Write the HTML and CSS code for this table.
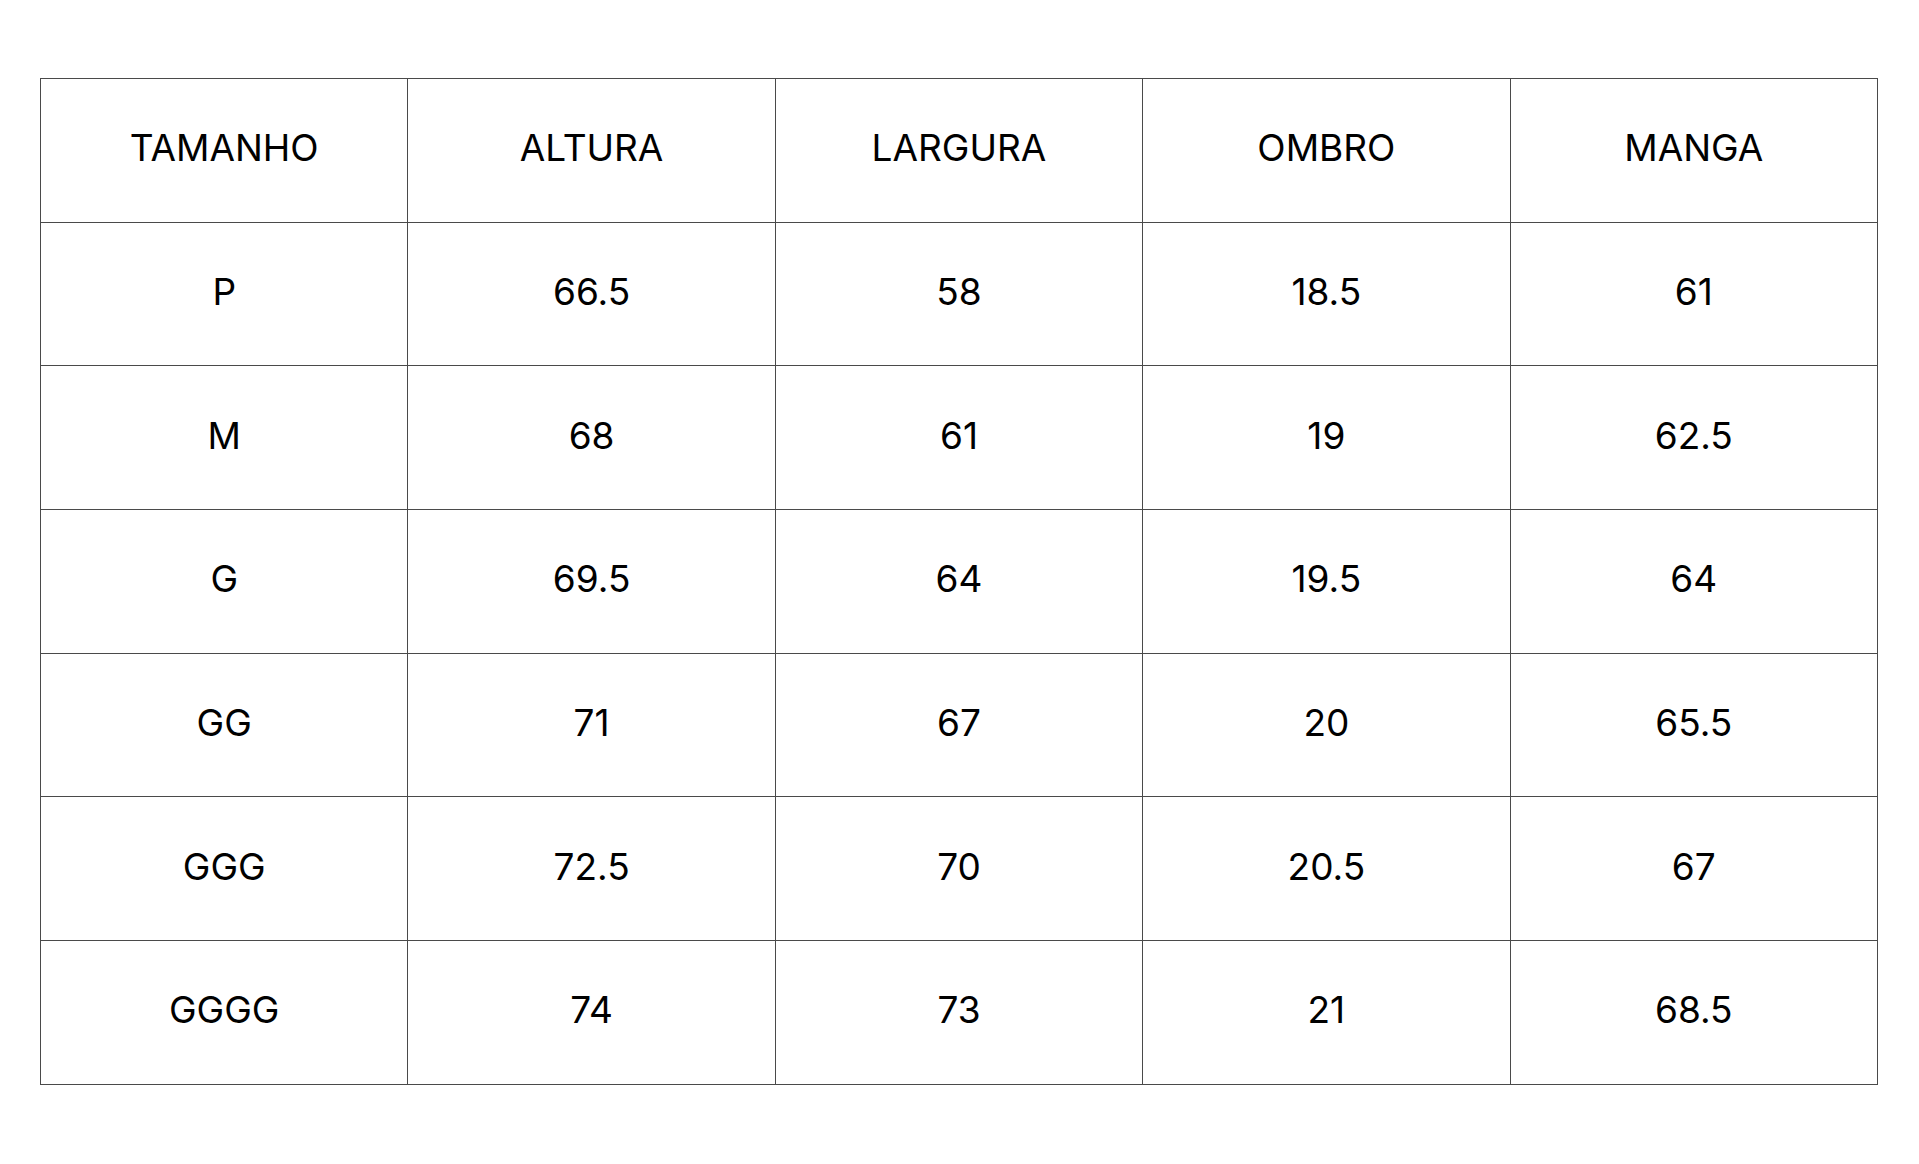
FILE: index.html
```html
<!DOCTYPE html>
<html lang="pt">
<head>
<meta charset="utf-8">
<title>Tabela de medidas</title>
<link rel="stylesheet" href="styles.css">
</head>
<body>
<main class="page">
<table class="sizes">
<thead>
<tr><th>TAMANHO</th><th>ALTURA</th><th>LARGURA</th><th>OMBRO</th><th>MANGA</th></tr>
</thead>
<tbody>
<tr><td>P</td><td>66.5</td><td>58</td><td>18.5</td><td>61</td></tr>
<tr><td>M</td><td>68</td><td>61</td><td>19</td><td>62.5</td></tr>
<tr><td>G</td><td>69.5</td><td>64</td><td>19.5</td><td>64</td></tr>
<tr><td>GG</td><td>71</td><td>67</td><td>20</td><td>65.5</td></tr>
<tr><td>GGG</td><td>72.5</td><td>70</td><td>20.5</td><td>67</td></tr>
<tr><td>GGGG</td><td>74</td><td>73</td><td>21</td><td>68.5</td></tr>
</tbody>
</table>
</main>
</body>
</html>
```
FILE: styles.css
```css
html, body {
  margin: 0;
  padding: 0;
  background: #ffffff;
}
.page {
  padding: 78px 0 0 40px;
}
.sizes {
  border-collapse: collapse;
  table-layout: fixed;
  width: 1838px;
  font-family: Inter, "Noto Sans", sans-serif;
  font-size: 37px;
  color: #000;
}
.sizes th,
.sizes td {
  border: 1px solid #4a4a4a;
  height: 137.7px;
  padding: 0 0 5px 0;
  text-align: center;
  vertical-align: middle;
  font-weight: 400;
}
```
